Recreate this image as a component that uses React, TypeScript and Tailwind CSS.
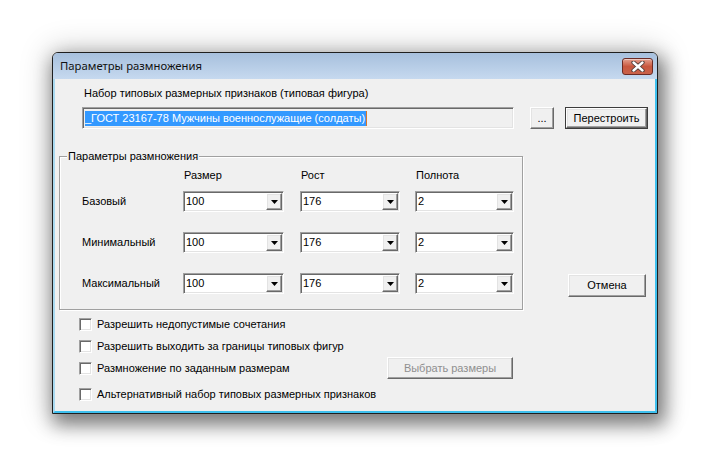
const RAISED =
  "border border-t-white border-l-white border-r-[#696969] border-b-[#696969] shadow-[inset_-1px_-1px_0_#a0a0a0,inset_1px_1px_0_#e3e3e3] bg-[#f0f0f0]";
const SUNKEN =
  "border border-t-[#a0a0a0] border-l-[#a0a0a0] border-r-white border-b-white shadow-[inset_1px_1px_0_#696969,inset_-1px_-1px_0_#e3e3e3]";

const ROWS = ["Базовый", "Минимальный", "Максимальный"];

const COLS = [
  { title: "Размер", value: "100", box: "w-[101px]" },
  { title: "Рост", value: "176", box: "w-[100px] ml-[16px]" },
  { title: "Полнота", value: "2", box: "w-[99px] ml-[15px]" },
];

function Combo({ value, className }: { value: string; className: string }) {
  return (
    <div className={`${className} ${SUNKEN} h-[21px] p-[1px] flex bg-white`}>
      <div className="flex-1 pl-[1px] text-[11px] leading-[17px] text-black">{value}</div>
      <div className={`${RAISED} w-[16px] h-full flex items-center justify-center`}>
        <svg width="7" height="4" viewBox="0 0 7 4">
          <polygon points="0,0 7,0 3.5,4" fill="#000" />
        </svg>
      </div>
    </div>
  );
}

function CheckRow({ label, className = "" }: { label: string; className?: string }) {
  return (
    <div className={`flex items-center gap-[5px] ${className}`}>
      <div className={`${SUNKEN} w-[13px] h-[13px] bg-white`} />
      <span className="text-[11px] leading-[13px] text-black">{label}</span>
    </div>
  );
}

export default function App() {
  return (
    <div className="w-[710px] h-[466px] bg-white overflow-hidden font-['Liberation_Sans',Arial,sans-serif]">
      <div className="ml-[52px] mt-[52px] w-[606px] h-[362px] flex flex-col border border-[#1f1f1f] rounded-t-[6px] shadow-[4px_8px_18px_3px_rgba(0,0,0,0.45),0_0_30px_4px_rgba(0,0,0,0.18)] bg-[#f0f0f0]">
        {/* title bar */}
        <div className="h-[26px] flex items-center justify-between pl-[7px] pr-[4px] rounded-t-[5px] bg-gradient-to-b from-[#a7c0dd] to-[#c6d9ef]">
          <span className="font-['Noto_Sans',sans-serif] text-[11.3px] text-[#111]">Параметры размножения</span>
          <div className="w-[31px] h-[17px] rounded-[3px] border border-[#6b2a24] bg-gradient-to-b from-[#e4a08f] via-[#c8573f] to-[#c9624a] flex items-center justify-center shadow-[inset_0_1px_0_rgba(255,255,255,0.45)]">
            <svg width="14" height="11" viewBox="0 0 14 11">
              <path d="M2.5 1.5 L11.5 9.5 M11.5 1.5 L2.5 9.5" stroke="#4a3a38" strokeWidth="4.2" strokeLinecap="round" />
              <path d="M2.5 1.5 L11.5 9.5 M11.5 1.5 L2.5 9.5" stroke="#fff" strokeWidth="2.4" strokeLinecap="round" />
            </svg>
          </div>
        </div>

        {/* client area */}
        <div className="flex-1 flex flex-col bg-[#f0f0f0] border-l-2 border-l-[#a9d9ef] border-r-2 border-r-[#3ec0ee] border-b-2 border-b-[#3ec0ee] text-[11px] leading-[13px] text-black">
          <div className="pl-[29px] pt-[8px]">Набор типовых размерных признаков (типовая фигура)</div>

          <div className="mt-[7px] ml-[27px] flex">
            <div className={`${SUNKEN} w-[432px] h-[22px] p-[1px] flex items-center pl-[2px] bg-[#f0f0f0]`}>
              <span className="bg-[#3399ff] text-white leading-[15px] pr-[1px] border-r border-r-[#d9762a]">
                _ГОСТ 23167-78 Мужчины военнослужащие (солдаты)
              </span>
            </div>
            <div className={`${RAISED} ml-[16px] w-[24px] h-[22px] flex items-center justify-center`}>...</div>
            <div className="ml-[11px] w-[83px] h-[22px] border border-[#3c3c3c] flex">
              <div className={`${RAISED} flex-1 flex items-center justify-center`}>Перестроить</div>
            </div>
          </div>

          <div className="mt-[27px] flex items-start">
            <div className="relative ml-[4px] w-[464px] h-[154px] border border-[#a0a0a0] shadow-[inset_1px_1px_0_white,1px_1px_0_white] pl-[22px]">
              <span className="absolute -top-[7px] left-[7px] px-[1px] bg-[#f0f0f0]">Параметры размножения</span>

              <div className="flex pt-[12px]">
                <div className="w-[101px]" />
                {COLS.map((c) => (
                  <div key={c.title} className={`${c.box} pl-[1px]`}>
                    {c.title}
                  </div>
                ))}
              </div>

              <div className="mt-[9px] flex flex-col gap-[20px]">
                {ROWS.map((r) => (
                  <div key={r} className="flex items-center">
                    <div className="w-[101px]">{r}</div>
                    {COLS.map((c) => (
                      <Combo key={c.title} value={c.value} className={c.box} />
                    ))}
                  </div>
                ))}
              </div>
            </div>

            <div className={`${RAISED} ml-[45px] mt-[118px] w-[78px] h-[23px] flex items-center justify-center`}>Отмена</div>
          </div>

          <div className="mt-[3px] pl-[24px] flex flex-col">
            <div className="h-[22px] flex items-center">
              <CheckRow label="Разрешить недопустимые сочетания" />
            </div>
            <div className="h-[22px] flex items-center">
              <CheckRow label="Разрешить выходить за границы типовых фигур" />
            </div>
            <div className="h-[22px] flex items-center">
              <CheckRow label="Размножение по заданным размерам" className="w-[308px]" />
              <div className={`${RAISED} w-[126px] h-[22px] flex items-center justify-center text-[#8f8f8f]`}>Выбрать размеры</div>
            </div>
            <div className="mt-[4px] h-[22px] flex items-center">
              <CheckRow label="Альтернативный набор типовых размерных признаков" />
            </div>
          </div>
        </div>
      </div>
    </div>
  );
}
